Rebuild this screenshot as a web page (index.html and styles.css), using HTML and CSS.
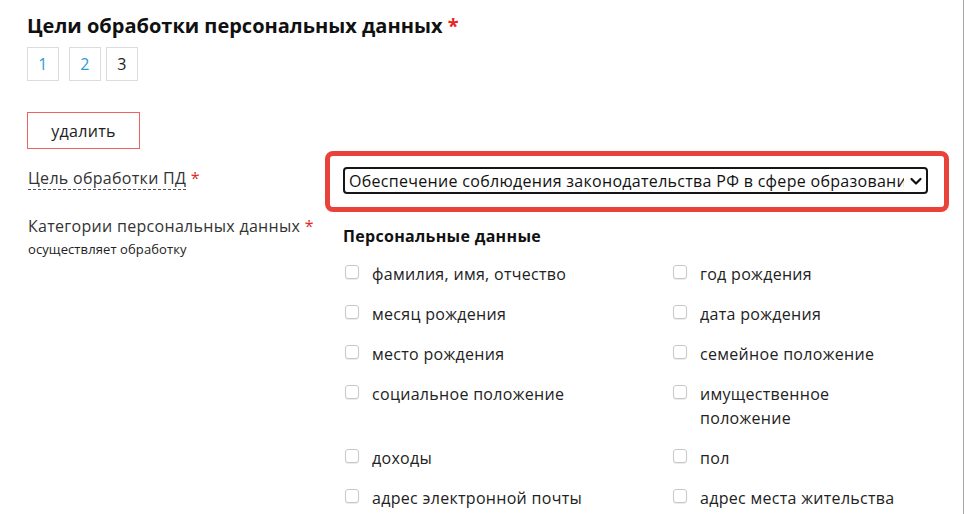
FILE: index.html
```html
<!DOCTYPE html>
<html lang="ru">
<head>
<meta charset="utf-8">
<title>Цели обработки персональных данных</title>
<link rel="stylesheet" href="styles.css">
</head>
<body>
<div class="page">
  <h1 class="title">Цели обработки персональных данных <span class="req">*</span></h1>
  <div class="pager">
    <a class="pager-item">1</a>
    <a class="pager-item">2</a>
    <span class="pager-item current">3</span>
  </div>
  <button class="btn-delete" type="button">удалить</button>

  <div class="form-row row-goal">
    <div class="label-col">
      <span class="label dashed">Цель обработки ПД</span> <span class="req">*</span>
    </div>
    <div class="field-col">
      <div class="select-wrap">
        <select class="select">
          <option>Обеспечение соблюдения законодательства РФ в сфере образования</option>
        </select>
        <svg class="chevron" width="14" height="10" viewBox="0 0 14 10"><path d="M2.5 3 L7 7.5 L11.5 3" fill="none" stroke="#111" stroke-width="2.2" stroke-linecap="round" stroke-linejoin="round"/></svg>
      </div>
    </div>
  </div>

  <div class="form-row row-cats">
    <div class="label-col">
      <div><span class="label">Категории персональных данных</span> <span class="req">*</span></div>
      <div class="hint">осуществляет обработку</div>
    </div>
    <div class="field-col cats">
      <div class="group-title">Персональные данные</div>
      <div class="check-grid">
        <label class="check"><input type="checkbox"><span>фамилия, имя, отчество</span></label>
        <label class="check"><input type="checkbox"><span>год рождения</span></label>
        <label class="check"><input type="checkbox"><span>месяц рождения</span></label>
        <label class="check"><input type="checkbox"><span>дата рождения</span></label>
        <label class="check"><input type="checkbox"><span>место рождения</span></label>
        <label class="check"><input type="checkbox"><span>семейное положение</span></label>
        <label class="check"><input type="checkbox"><span>социальное положение</span></label>
        <label class="check"><input type="checkbox"><span>имущественное положение</span></label>
        <label class="check"><input type="checkbox"><span>доходы</span></label>
        <label class="check"><input type="checkbox"><span>пол</span></label>
        <label class="check"><input type="checkbox"><span>адрес электронной почты</span></label>
        <label class="check"><input type="checkbox"><span>адрес места жительства</span></label>
      </div>
    </div>
  </div>
</div>
</body>
</html>
```
FILE: styles.css
```css
html, body {
  margin: 0;
  padding: 0;
  height: 100%;
  overflow: hidden;
  background: #fff;
}
body {
  font-family: "Open Sans", "Liberation Sans", sans-serif;
  color: #222;
  font-size: 16px;
  letter-spacing: 0.3px;
}
.page {
  box-sizing: border-box;
  width: 964px;
  min-height: 100%;
  padding: 12px 0 0 27px;
  border-right: 1px solid #a8a8a8;
}
.title {
  margin: 0;
  font-size: 20px;
  line-height: 28px;
  font-weight: 700;
  letter-spacing: 0;
  color: #111;
}
.req {
  color: #e8261e;
}
.pager {
  display: flex;
  gap: 5px;
  margin-top: 7px;
}
.pager-item {
  box-sizing: border-box;
  width: 32px;
  height: 34px;
  border: 1px solid #dcdcdc;
  line-height: 32px;
  text-align: center;
  font-size: 16px;
  color: #2f9ad8;
  text-decoration: none;
}
.pager-item:first-child {
  margin-right: 5px;
}
.pager-item.current {
  color: #222;
}
.btn-delete {
  display: block;
  box-sizing: border-box;
  width: 113px;
  height: 37px;
  margin-top: 31px;
  padding: 0;
  border: 1px solid #f06262;
  background: #fff;
  font-family: inherit;
  font-size: 16px;
  letter-spacing: 0.3px;
  color: #222;
}
.form-row {
  display: flex;
}
.label-col {
  width: 315px;
  padding-left: 1px;
  line-height: 22px;
  color: #333;
}
.label.dashed {
  border-bottom: 1px dashed #555;
}
.field-col {
  flex: 1;
}
.row-goal {
  margin-top: 18px;
}
.select-wrap {
  position: relative;
  width: 585px;
}
.select-wrap::before {
  content: "";
  position: absolute;
  top: -16px;
  left: -18px;
  right: -21px;
  bottom: -18px;
  border: 5px solid #e8423a;
  border-radius: 8px;
  pointer-events: none;
}
.select {
  display: block;
  box-sizing: border-box;
  width: 585px;
  height: 27px;
  margin: 0;
  padding: 0 22px 0 4px;
  border: 2px solid #151515;
  border-radius: 4px;
  background: #fff;
  font-family: inherit;
  font-size: 16px;
  letter-spacing: 0.3px;
  color: #111;
  -webkit-appearance: none;
  appearance: none;
}
.chevron {
  position: absolute;
  right: 5px;
  top: 9px;
}
.row-cats {
  margin-top: 21px;
}
.hint {
  margin-top: 3px;
  font-size: 13px;
  line-height: 18px;
  letter-spacing: 0.1px;
  color: #222;
}
.cats {
  padding-top: 10px;
}
.group-title {
  font-weight: 700;
  font-size: 16px;
  line-height: 22px;
  color: #111;
}
.check-grid {
  display: grid;
  grid-template-columns: 328px 245px;
  margin-top: 15px;
}
.check {
  display: flex;
  align-items: flex-start;
  line-height: 24px;
  margin-bottom: 16px;
  color: #222;
}
.check input {
  -webkit-appearance: none;
  appearance: none;
  flex: none;
  box-sizing: border-box;
  width: 14px;
  height: 14px;
  margin: 3px 13px 0 2px;
  border: 1px solid #c8c8c8;
  border-radius: 3px;
  background: #fff;
  box-shadow: 0 1px 1px rgba(0, 0, 0, 0.08);
}
```
